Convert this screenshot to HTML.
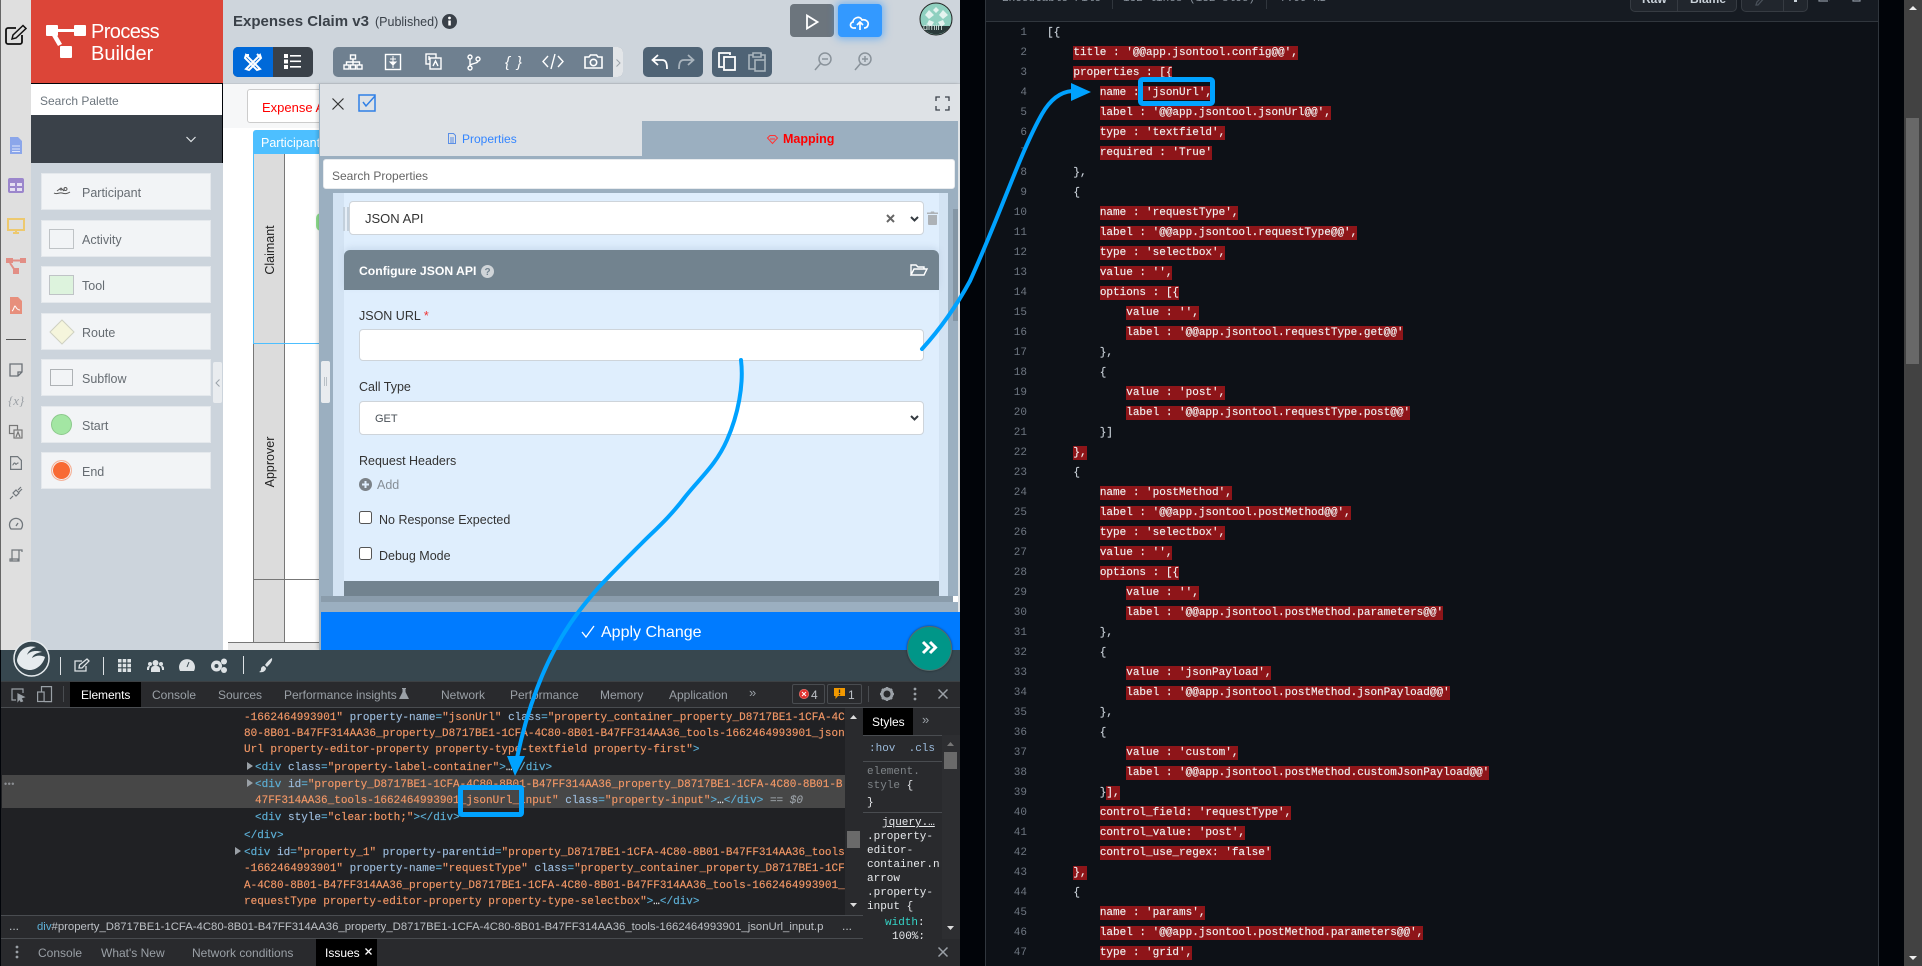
<!DOCTYPE html>
<html><head><meta charset="utf-8"><style>
*{box-sizing:border-box}
html,body{margin:0;padding:0;width:1922px;height:966px;overflow:hidden;background:#010409;font-family:"Liberation Sans",sans-serif}
.a{position:absolute}
.t{position:absolute;white-space:nowrap;line-height:1}
.card{position:absolute;left:41px;width:170px;height:37px;background:#f2f4f6;border:1px solid #e4e8ec}
.card span{position:absolute;left:40px;top:12px;font-size:12.5px;color:#666c72;line-height:14px}
pre{margin:0;font-family:"Liberation Mono",monospace}
#code{position:absolute;left:1047px;top:23px;font-size:11px;line-height:20px;color:#c9d1d9;-webkit-text-stroke:.15px}
#code i{font-style:normal;display:inline-block;background:#8e1519;color:#f0f0f0;line-height:14px;height:14px}
#nums{position:absolute;left:990px;width:37px;top:23px;font-size:11px;line-height:20px;color:#6e7681;text-align:right}
.dom{position:absolute;font:11px/14px "Liberation Mono",monospace;white-space:pre;color:#f29766;-webkit-text-stroke:.15px;margin-top:1px}
.dom b{font-weight:normal;color:#5db0d7}.dom u{text-decoration:none;color:#9bbbdc}
.tab{position:absolute;top:688px;font-size:12px;color:#9aa0a6;line-height:14px;white-space:nowrap}
.st{position:absolute;left:867px;font:11px/14px "Liberation Mono",monospace;color:#e8eaed;white-space:pre;margin-top:1px}
svg{position:absolute;overflow:visible}
</style></head><body>

<!-- left rail -->
<div class="a" style="left:0;top:0;width:31px;height:650px;background:#dfdfdf;border-left:1px solid #666"></div>
<svg style="left:4px;top:24px" width="24" height="22" viewBox="0 0 24 22" fill="none"><path d="M18 11v7a2 2 0 0 1-2 2H4a2 2 0 0 1-2-2V6a2 2 0 0 1 2-2h8" stroke="#111" stroke-width="1.8"/><path d="M8 15l1-4L19 1.5l3 3L12 14z" stroke="#111" stroke-width="1.5"/></svg>
<svg style="left:9px;top:137px" width="14" height="18" viewBox="0 0 14 18"><path d="M1 0h8l4 4v13H1z" fill="#8ba6ea"/><path d="M3 9h8M3 12h8M3 14.5h8" stroke="#dfe6fa"/></svg>
<svg style="left:8px;top:178px" width="16" height="15" viewBox="0 0 16 15"><rect width="16" height="15" rx="2" fill="#9b86cc"/><path d="M2 5h5v3H2zM9 5h5v3H9zM2 10h5v3H2zM9 10h5v3H9z" fill="#e5dff2"/></svg>
<svg style="left:7px;top:218px" width="18" height="16" viewBox="0 0 18 16" fill="none"><rect x="1" y="1" width="16" height="11" stroke="#edc96f" stroke-width="2"/><path d="M6 15h6M9 12v3" stroke="#edc96f" stroke-width="2"/></svg>
<svg style="left:6px;top:258px" width="20" height="16" viewBox="0 0 20 16"><g fill="#e28e85"><rect width="7" height="5"/><rect x="14" width="6" height="5"/><rect x="7" y="10" width="6" height="6"/></g><path d="M7 2.5h7M4 5l4 6" stroke="#e28e85" stroke-width="2"/></svg>
<svg style="left:9px;top:297px" width="14" height="18" viewBox="0 0 14 18"><path d="M1 0h8l4 4v13H1z" fill="#e78f7c"/><path d="M3 14c2-1 2-5 3-5s1 4 5 4" stroke="#fff" fill="none"/></svg>
<div class="a" style="left:6px;top:339px;width:20px;height:1px;background:#555"></div>
<svg style="left:9px;top:363px" width="14" height="14" viewBox="0 0 14 14" fill="none" stroke="#6b7177" stroke-width="1.3"><path d="M1 1h12v8l-4 4H1zM13 9H9v4"/></svg>
<div class="t" style="left:8px;top:393px;font:italic 13px 'Liberation Serif',serif;color:#9ca1a6">{x}</div>
<svg style="left:9px;top:425px" width="14" height="14" viewBox="0 0 14 14" fill="none" stroke="#777" stroke-width="1.2"><rect x=".5" y=".5" width="8" height="8"/><rect x="5" y="5" width="8" height="8" fill="#dfdfdf"/><path d="M7 12l2-5 2 5"/></svg>
<svg style="left:10px;top:456px" width="12" height="14" viewBox="0 0 12 14" fill="none" stroke="#70767b" stroke-width="1.2"><path d="M.6.6h7l3.8 3.8v9H.6zM2.5 9c1 0 1-2 2-2s1 2 2 1 1-1 2-1"/></svg>
<svg style="left:9px;top:486px" width="14" height="14" viewBox="0 0 14 14" fill="none" stroke="#70767b" stroke-width="1.2"><path d="M1 13l3-3M4 7l3 3 3-3-3-3zM9 4l3-3M10 6l3-3"/></svg>
<svg style="left:9px;top:519px" width="14" height="11" viewBox="0 0 14 11" fill="none" stroke="#70767b" stroke-width="1.3"><path d="M2 10a6.5 6.5 0 1 1 10 0zM7 7l2-3"/></svg>
<svg style="left:9px;top:549px" width="14" height="14" viewBox="0 0 14 14" fill="none" stroke="#70767b" stroke-width="1.2"><path d="M3 12V1h10v2M10 1v11H1v-2h8v2"/></svg>

<!-- logo -->
<div class="a" style="left:31px;top:0;width:192px;height:83px;background:#dc4538"></div>
<svg style="left:46px;top:25px" width="41" height="33" viewBox="0 0 41 33"><g fill="#fff"><rect width="12" height="11" rx="1"/><rect x="28" width="12" height="11" rx="1"/><rect x="14" y="21" width="12" height="12" rx="1"/><rect x="10" y="4" width="20" height="3"/><path d="M5 9l4-2 7 12-4 2z"/></g></svg>
<div class="t" style="left:91px;top:21px;font-size:20px;color:#fff;line-height:22px;letter-spacing:-.6px">Process</div>
<div class="t" style="left:91px;top:43px;font-size:20px;color:#fff;line-height:22px">Builder</div>

<!-- palette -->
<div class="a" style="left:31px;top:84px;width:191px;height:31px;background:#fff"></div>
<div class="t" style="left:40px;top:95px;font-size:12px;color:#6c757d">Search Palette</div>
<div class="a" style="left:31px;top:115px;width:191px;height:48px;background:#3a4149"></div>
<svg style="left:186px;top:136px" width="10" height="7" viewBox="0 0 10 7" fill="none" stroke="#dfe3e6" stroke-width="1.2"><path d="M.5 1L5 5.5 9.5 1"/></svg>
<div class="a" style="left:31px;top:163px;width:192px;height:487px;background:#ccd4dc"></div>
<div class="card" style="top:173px"><span>Participant</span></div>
<svg style="left:53px;top:186px" width="18" height="11" viewBox="0 0 18 11" fill="none" stroke="#555" stroke-width="1"><path d="M1 7c3 2 5-1 8 0s5 1 8-1M4 5l4-3 3 3M11 3a1.5 1.5 0 1 0 3 0 1.5 1.5 0 1 0-3 0M7 3a1 1 0 1 0 2 0"/></svg>
<div class="card" style="top:220px"><span>Activity</span></div>
<div class="a" style="left:49px;top:229px;width:25px;height:20px;background:#f2f4f6;border:1.5px solid #bfc3c6"></div>
<div class="card" style="top:266px"><span>Tool</span></div>
<div class="a" style="left:49px;top:275px;width:25px;height:20px;background:#ddf3dd;border:1.5px solid #bfc3c6"></div>
<div class="card" style="top:313px"><span>Route</span></div>
<svg style="left:50px;top:320px" width="24" height="24" viewBox="0 0 24 24"><path d="M12 0l12 12-12 12L0 12z" fill="#f5f5dc" stroke="#cfd1c2"/></svg>
<div class="card" style="top:359px"><span>Subflow</span></div>
<div class="a" style="left:50px;top:369px;width:23px;height:17px;background:#f2f4f6;border:1px solid #aeb2b5"></div>
<div class="card" style="top:406px"><span>Start</span></div>
<div class="a" style="left:51px;top:414px;width:21px;height:21px;border-radius:50%;background:#a3e6a3;border:1px solid #8cc98c"></div>
<div class="card" style="top:452px"><span>End</span></div>
<div class="a" style="left:51px;top:460px;width:21px;height:21px;border-radius:50%;background:#f86a34;box-shadow:inset 0 0 0 1px #f2f4f6;border:1px solid #f5b39a"></div>
<div class="a" style="left:213px;top:362px;width:9px;height:41px;background:#e9ecef;border-radius:2px"></div>
<svg style="left:215px;top:379px" width="5" height="8" viewBox="0 0 5 8" fill="none" stroke="#9aa2a9"><path d="M4.5.5L1 4l3.5 3.5"/></svg>

<!-- header -->
<div class="a" style="left:223px;top:0;width:737px;height:84px;background:#ced5dc;border-bottom:1px solid #c2c8ce"></div>
<div class="t" style="left:233px;top:14px;font-size:15px;font-weight:bold;color:#3a4149">Expenses Claim v3</div>
<div class="t" style="left:375px;top:16px;font-size:12.5px;color:#3a4149">(Published)</div>
<svg style="left:442px;top:14px" width="15" height="15" viewBox="0 0 15 15"><circle cx="7.5" cy="7.5" r="7.5" fill="#3a4149"/><rect x="6.3" y="6.5" width="2.5" height="5" fill="#fff"/><circle cx="7.5" cy="4" r="1.4" fill="#fff"/></svg>
<div class="a" style="left:233px;top:47px;width:80px;height:30px;background:#3a4149;border-radius:5px"></div>
<div class="a" style="left:233px;top:47px;width:40px;height:30px;background:#0069d9;border-radius:5px 0 0 5px"></div>
<svg style="left:244px;top:53px" width="18" height="18" viewBox="0 0 18 18" fill="none" stroke="#fff" stroke-width="2"><path d="M2 2l14 14-3 1L1 5zM16 2L2 16l3 1L17 5zM2 2l3 0M13 1l4 4"/></svg>
<svg style="left:284px;top:54px" width="17" height="15" viewBox="0 0 17 15"><g fill="#fff"><rect width="4" height="4"/><rect y="5.5" width="4" height="4"/><rect y="11" width="4" height="4"/><rect x="6" y="1" width="11" height="1.6"/><rect x="6" y="6.5" width="11" height="1.6"/><rect x="6" y="12" width="11" height="1.6"/></g></svg>
<div class="a" style="left:333px;top:47px;width:290px;height:30px;background:#6f8090;border-radius:5px"></div>
<div class="a" style="left:613px;top:47px;width:10px;height:30px;background:#e2e5e8;border-radius:0 5px 5px 0"></div>
<svg style="left:616px;top:59px" width="5" height="8" viewBox="0 0 5 8" fill="none" stroke="#9aa2a9"><path d="M.5.5L4 4 .5 7.5"/></svg>
<svg style="left:343px;top:54px" width="20" height="16" viewBox="0 0 20 16" fill="none" stroke="#fff" stroke-width="1.4"><rect x="7.5" y="1" width="5" height="4"/><rect x="1" y="11" width="5" height="4"/><rect x="7.5" y="11" width="5" height="4"/><rect x="14" y="11" width="5" height="4"/><path d="M10 5v6M3.5 11V8h13v3"/></svg>
<svg style="left:385px;top:54px" width="16" height="16" viewBox="0 0 16 16"><rect x=".5" y=".5" width="15" height="15" fill="none" stroke="#fff" stroke-width="1.4"/><path d="M8 2v12M5 5h6M5 8h6l-3 3z" stroke="#fff" fill="#fff"/></svg>
<svg style="left:425px;top:53px" width="17" height="17" viewBox="0 0 17 17" fill="none" stroke="#fff" stroke-width="1.4"><rect x="1" y="1" width="10" height="10"/><rect x="5" y="5" width="11" height="11" fill="#6f8090"/><path d="M8 13l2.5-5 2.5 5M4 3v4"/></svg>
<svg style="left:467px;top:54px" width="14" height="17" viewBox="0 0 14 17" fill="none" stroke="#fff" stroke-width="1.4"><circle cx="3" cy="3" r="2"/><circle cx="3" cy="14" r="2"/><circle cx="11" cy="5" r="2"/><path d="M3 5v7M11 7c0 3-8 2-8 5"/></svg>
<div class="t" style="left:505px;top:54px;font:italic 15px 'Liberation Sans',sans-serif;color:#fff;letter-spacing:-.5px">{&nbsp;&nbsp;}</div>
<svg style="left:542px;top:54px" width="22" height="15" viewBox="0 0 22 15" fill="none" stroke="#fff" stroke-width="1.4"><path d="M6 2L1 7.5 6 13M16 2l5 5.5-5 5.5M13 0L9 15"/></svg>
<svg style="left:584px;top:54px" width="19" height="15" viewBox="0 0 19 15" fill="none" stroke="#fff" stroke-width="1.6"><path d="M1 3h4l1.500-2h6L14 3h4v11H1z"/><circle cx="9.5" cy="8.5" r="3.2"/></svg>
<div class="a" style="left:643px;top:47px;width:60px;height:30px;background:#4f6375;border-radius:5px"></div>
<svg style="left:651px;top:54px" width="44" height="16" viewBox="0 0 44 16" fill="none" stroke-width="1.8"><path d="M7 1L1.500 6 7 11M2 6h9c4 0 5 3 5 9" stroke="#fff"/><path d="M37 1l5.500 5L37 11M42 6h-9c-4 0-5 3-5 9" stroke="#a9b4bd"/></svg>
<div class="a" style="left:712px;top:47px;width:60px;height:30px;background:#4f6375;border-radius:5px"></div>
<svg style="left:718px;top:52px" width="18" height="19" viewBox="0 0 18 19" fill="none" stroke="#fff" stroke-width="1.8"><path d="M12 3V1H1v14h4"/><rect x="6" y="5" width="11" height="13" fill="#4f6375"/></svg>
<svg style="left:748px;top:52px" width="18" height="20" viewBox="0 0 18 20" fill="none" stroke="#a9b4bd" stroke-width="1.6"><path d="M5 3H1v14h6M13 3h4v5M5 1h8v4H5z"/><rect x="7" y="8" width="10" height="11"/></svg>
<svg style="left:814px;top:52px" width="18" height="19" viewBox="0 0 18 19" fill="none" stroke="#8a939b" stroke-width="1.5"><circle cx="11" cy="7" r="6"/><path d="M6.500 11.500L1 18M8 7h6"/></svg>
<svg style="left:854px;top:52px" width="18" height="19" viewBox="0 0 18 19" fill="none" stroke="#8a939b" stroke-width="1.5"><circle cx="11" cy="7" r="6"/><path d="M6.500 11.500L1 18M8 7h6M11 4v6"/></svg>
<div class="a" style="left:790px;top:4px;width:44px;height:33px;background:#6c757d;border-radius:4px"></div>
<svg style="left:806px;top:14px" width="13" height="16" viewBox="0 0 13 16" fill="none" stroke="#fff" stroke-width="1.8"><path d="M1 1.500v13L11.500 8z"/></svg>
<div class="a" style="left:838px;top:4px;width:44px;height:33px;background:#3399ff;border-radius:4px;box-shadow:0 0 8px 2px rgba(51,153,255,.55)"></div>
<svg style="left:850px;top:15px" width="20" height="16" viewBox="0 0 20 16" fill="none" stroke="#fff" stroke-width="1.7"><path d="M6 13H4a3 3 0 0 1-1-6c0-4 7-7 9-2 4-1 7 2 6 5-.5 2-2 3-4 3M10 15V7M7 10l3-3 3 3"/></svg>
<svg style="left:919px;top:2px" width="34" height="34" viewBox="0 0 34 34"><circle cx="17" cy="17" r="16" fill="#8fd0c0" stroke="#222" stroke-width="1"/><path d="M10 8l5 5-5 4-4-4zM24 8l5 5-5 4-4-4zM17 5l3 3-3 3-3-3zM10 18l5 2-3 5-4-3zM24 18l-5 2 3 5 4-3z" fill="#e3f3ef"/><path d="M3 24h28a16 16 0 0 1-28 0z" fill="#2a3a3a"/></svg>
<div class="t" style="left:923px;top:23px;font-size:9px;color:#d8e8e5">dmin</div>

<!-- canvas -->
<div class="a" style="left:223px;top:84px;width:100px;height:566px;background:#fff"></div>
<div class="a" style="left:223px;top:84px;width:100px;height:44px;background:#f6f7f8"></div>
<div class="a" style="left:247px;top:89px;width:80px;height:34px;background:#fff;border:1px solid #ccc;border-radius:3px"></div>
<div class="t" style="left:262px;top:101px;font-size:13px;color:#f00">Expense A</div>
<div class="a" style="left:253px;top:130px;width:68px;height:24px;background:#4dbfff;border-radius:3px 0 0 0"></div>
<div class="t" style="left:261px;top:137px;font-size:12.5px;color:#fff">Participant</div>
<div class="a" style="left:253px;top:154px;width:32px;height:489px;background:#dcdcdc;border-left:1px solid #777;border-right:1px solid #777;border-bottom:1px solid #777"></div>
<div class="a" style="left:253px;top:154px;width:1px;height:189px;background:#4dbfff"></div>
<div class="a" style="left:253px;top:343px;width:68px;height:1px;background:#4dbfff"></div>
<div class="a" style="left:253px;top:579px;width:68px;height:1px;background:#777"></div>
<div class="a" style="left:284px;top:642px;width:37px;height:1px;background:#777"></div>
<div class="a" style="left:228px;top:643px;width:93px;height:7px;background:#e8e8e8"></div>
<div class="a" style="left:228px;top:642px;width:25px;height:1px;background:#777"></div>
<div class="t" style="left:242px;top:250px;font-size:12.5px;color:#222;transform:translate(-50%,-50%) rotate(-90deg);transform-origin:center;margin-left:28px">Claimant</div>
<div class="t" style="left:242px;top:462px;font-size:12.5px;color:#222;transform:translate(-50%,-50%) rotate(-90deg);transform-origin:center;margin-left:28px">Approver</div>
<div class="a" style="left:316px;top:213px;width:5px;height:18px;background:#8fe08f;border-radius:5px 0 0 5px"></div>

<!-- panel -->
<div class="a" style="left:319px;top:84px;width:641px;height:566px;background:#9bafc0;box-shadow:-2px 0 3px rgba(0,0,0,.15)"></div>
<div class="a" style="left:320px;top:84px;width:640px;height:37px;background:#dee2e6"></div>
<div class="a" style="left:320px;top:121px;width:322px;height:35px;background:#dee2e6"></div>
<svg style="left:332px;top:98px" width="12" height="12" viewBox="0 0 12 12" stroke="#333" stroke-width="1.2"><path d="M.5.500l11 11M11.500.500l-11 11"/></svg>
<svg style="left:358px;top:94px" width="19" height="18" viewBox="0 0 19 18" fill="none" stroke="#2f7fe6" stroke-width="1.5"><rect x="1" y="1" width="16" height="16"/><path d="M5 8l3 4 9-10"/></svg>
<svg style="left:935px;top:96px" width="15" height="15" viewBox="0 0 15 15" fill="none" stroke="#3a4149" stroke-width="1.3"><path d="M1 5V1h4M10 1h4v4M14 10v4h-4M5 14H1v-4"/></svg>
<svg style="left:448px;top:133px" width="8" height="11" viewBox="0 0 8 11" fill="none" stroke="#5b8fe6"><path d="M.5.500h5l2 2v8h-7zM2 5h4M2 7h4M2 9h4"/></svg>
<div class="t" style="left:462px;top:133px;font-size:12px;color:#3385ff">Properties</div>
<div class="a" style="left:642px;top:121px;width:316px;height:35px;background:#9bafc0;border-radius:4px 4px 0 0"></div>
<svg style="left:767px;top:135px" width="11" height="9" viewBox="0 0 11 9" fill="none" stroke="#f33"><path d="M.5 3L3 .5h5L10.500 3 5.500 8.500zM3 4h5"/></svg>
<div class="t" style="left:783px;top:133px;font-size:12.5px;font-weight:bold;color:#f00">Mapping</div>
<div class="a" style="left:323px;top:159px;width:632px;height:30px;background:#fff;border:1px solid #e8ebee;border-radius:3px"></div>
<div class="t" style="left:332px;top:170px;font-size:12px;color:#666">Search Properties</div>
<div class="a" style="left:333px;top:193px;width:615px;height:403px;background:#dfeefd"></div>
<div class="a" style="left:333px;top:193px;width:11px;height:403px;background:#d3e3f3"></div>
<div class="a" style="left:939px;top:193px;width:9px;height:403px;background:#d3e3f3"></div>
<div class="a" style="left:948px;top:189px;width:10px;height:407px;background:#9bafc0"></div>
<div class="a" style="left:953px;top:209px;width:5px;height:112px;background:#8496a5"></div>
<div class="a" style="left:958px;top:84px;width:2px;height:566px;background:#dfe3e6"></div>
<div class="a" style="left:343px;top:207px;width:2px;height:24px;background:#c3d0dc;box-shadow:2px 0 0 #e6eff8,4px 0 0 #c3d0dc"></div>
<div class="a" style="left:349px;top:201px;width:575px;height:34px;background:#fff;border:1px solid #ced4da;border-radius:4px"></div>
<div class="t" style="left:365px;top:212px;font-size:13px;color:#333">JSON API</div>
<svg style="left:886px;top:214px" width="9" height="9" viewBox="0 0 9 9" stroke="#666" stroke-width="2"><path d="M1 1l7 7M8 1L1 8"/></svg>
<svg style="left:910px;top:216px" width="9" height="6" viewBox="0 0 9 6" fill="none" stroke="#343a40" stroke-width="2"><path d="M1 1l3.500 3.500L8 1"/></svg>
<svg style="left:927px;top:211px" width="11" height="14" viewBox="0 0 11 14" fill="#adb2b7"><path d="M0 1.500h3.500L4 .5h3l.5 1H11V3H0zM1 4h9v9a1 1 0 0 1-1 1H2a1 1 0 0 1-1-1z"/></svg>
<div class="a" style="left:344px;top:250px;width:595px;height:40px;background:#72838f;border-radius:6px 6px 0 0;box-shadow:0 -3px 6px rgba(150,175,200,.25)"></div>
<div class="t" style="left:359px;top:265px;font-size:12.2px;font-weight:bold;color:#fff">Configure JSON API</div>
<svg style="left:481px;top:265px" width="13" height="13" viewBox="0 0 13 13"><circle cx="6.500" cy="6.500" r="6.500" fill="#cfd4d8"/><text x="6.500" y="10" font-size="10" font-weight="bold" text-anchor="middle" fill="#72838f" font-family="Liberation Sans">?</text></svg>
<svg style="left:910px;top:264px" width="18" height="12" viewBox="0 0 18 12" fill="none" stroke="#fff" stroke-width="1.4"><path d="M1 11V1h5l2 2h6v2M1 11l3-6h13l-3 6z"/></svg>
<div class="t" style="left:359px;top:310px;font-size:12.5px;color:#333">JSON URL <span style="color:#e33">*</span></div>
<div class="a" style="left:359px;top:329px;width:565px;height:32px;background:#fff;border:1px solid #ced4da;border-radius:4px"></div>
<div class="t" style="left:359px;top:381px;font-size:12.5px;color:#333">Call Type</div>
<div class="a" style="left:359px;top:401px;width:565px;height:34px;background:#fff;border:1px solid #ced4da;border-radius:4px"></div>
<div class="t" style="left:375px;top:414px;font-size:11px;color:#495057">GET</div>
<svg style="left:910px;top:415px" width="9" height="6" viewBox="0 0 9 6" fill="none" stroke="#343a40" stroke-width="2"><path d="M1 1l3.500 3.500L8 1"/></svg>
<div class="t" style="left:359px;top:455px;font-size:12.5px;color:#333">Request Headers</div>
<svg style="left:359px;top:478px" width="13" height="13" viewBox="0 0 13 13"><circle cx="6.500" cy="6.500" r="6.500" fill="#7b8288"/><path d="M6.500 3v7M3 6.500h7" stroke="#dfeefd" stroke-width="2"/></svg>
<div class="t" style="left:377px;top:479px;font-size:12.5px;color:#868e96">Add</div>
<div class="a" style="left:359px;top:511px;width:13px;height:13px;background:#fff;border:1px solid #555;border-radius:2.5px"></div>
<div class="t" style="left:379px;top:514px;font-size:12.5px;color:#333">No Response Expected</div>
<div class="a" style="left:359px;top:547px;width:13px;height:13px;background:#fff;border:1px solid #555;border-radius:2.5px"></div>
<div class="t" style="left:379px;top:550px;font-size:12.5px;color:#333">Debug Mode</div>
<div class="a" style="left:344px;top:581px;width:595px;height:15px;background:#72838f"></div>
<div class="a" style="left:321px;top:596px;width:637px;height:6px;background:#8a9cab"></div>
<div class="a" style="left:953px;top:596px;width:5px;height:6px;background:#fff"></div>
<div class="a" style="left:321px;top:612px;width:639px;height:38px;background:#007bff"></div>
<svg style="left:581px;top:625px" width="14" height="13" viewBox="0 0 14 13" fill="none" stroke="#fff" stroke-width="1.3"><path d="M1 7l4 5 8-11"/></svg>
<div class="t" style="left:601px;top:625px;font-size:16px;color:#fff">Apply Change</div>
<div class="a" style="left:321px;top:361px;width:9px;height:42px;background:#e9ecef;border-radius:2px"></div>
<div class="a" style="left:324px;top:377px;width:1px;height:9px;background:#b9c0c6;box-shadow:2px 0 0 #b9c0c6"></div>

<!-- devtools -->
<div class="a" style="left:1px;top:650px;width:959px;height:31px;background:#37474f"></div>
<svg style="left:13px;top:640px" width="37" height="37" viewBox="0 0 37 37"><circle cx="18.500" cy="18.500" r="17.500" fill="#37474f" stroke="#e6ebee" stroke-width="1.5"/><path d="M4 20C6 9 14 5 23 7c-6 2-8 5-9 8 3-4 9-5 15-3-6 1-9 3-10 6 4-3 9-3 13-1-2 8-9 13-15 13-7 0-13-5-13-10z" fill="#e6ebee"/></svg>
<div class="a" style="left:60px;top:657px;width:1px;height:18px;background:#dde2e5"></div>
<div class="a" style="left:103px;top:657px;width:1px;height:18px;background:#dde2e5"></div>
<div class="a" style="left:243px;top:656px;width:1px;height:18px;background:#dde2e5"></div>
<svg style="left:74px;top:658px" width="16" height="15" viewBox="0 0 16 15" fill="none" stroke="#dde2e5" stroke-width="1.3"><path d="M12 8v5H1V3h7"/><path d="M5 10l.5-3L13 1l2 2-7 7z"/></svg>
<svg style="left:118px;top:659px" width="13" height="13" viewBox="0 0 13 13" fill="#dde2e5"><path d="M0 0h3.500v3.500H0zM4.700 0h3.500v3.500H4.700zM9.400 0H13v3.500H9.400zM0 4.700h3.500v3.500H0zM4.700 4.700h3.500v3.500H4.700zM9.400 4.700H13v3.500H9.400zM0 9.400h3.500V13H0zM4.700 9.400h3.500V13H4.700zM9.400 9.400H13V13H9.400z"/></svg>
<svg style="left:147px;top:660px" width="17" height="12" viewBox="0 0 17 12" fill="#dde2e5"><circle cx="8.500" cy="3" r="3"/><circle cx="3" cy="4" r="2"/><circle cx="14" cy="4" r="2"/><path d="M4 12V9a3 3 0 0 1 3-3h3a3 3 0 0 1 3 3v3zM0 10V8c0-1 1-2 2-2h1l-1 3v1zM17 10V8c0-1-1-2-2-2h-1l1 3v1z"/></svg>
<svg style="left:179px;top:658px" width="16" height="14" viewBox="0 0 16 14" fill="#dde2e5"><path d="M1 13a8 8 0 1 1 14 0z"/><path d="M8 9l2-5" stroke="#37474f"/></svg>
<svg style="left:210px;top:658px" width="18" height="15" viewBox="0 0 18 15" fill="#dde2e5"><circle cx="6.500" cy="8" r="5.500"/><circle cx="14" cy="3.500" r="3"/><circle cx="14" cy="12" r="3"/><circle cx="6.500" cy="8" r="2" fill="#37474f"/></svg>
<svg style="left:259px;top:658px" width="14" height="15" viewBox="0 0 14 15" fill="#dde2e5"><path d="M13 0c1 3-3 7-5 9L6 7c2-3 5-6 7-7zM5 8l2 2c0 3-3 5-7 4 2-1 2-2 2-3 0-2 2-3 3-3z"/></svg>
<div class="a" style="left:1px;top:681px;width:959px;height:27px;background:#292a2d;border-top:1px solid #3c4043;border-bottom:1px solid #494c50"></div>
<svg style="left:11px;top:688px" width="14" height="14" viewBox="0 0 14 14" fill="none" stroke="#9aa0a6" stroke-width="1.2"><path d="M5 12H1V1h11v4"/><path d="M7 6l6 3-3 1 1.500 3-1.500.5L8.500 11 7 13z" fill="#9aa0a6"/></svg>
<svg style="left:37px;top:686px" width="15" height="16" viewBox="0 0 15 16" fill="none" stroke="#9aa0a6" stroke-width="1.2"><path d="M4.500 6V.6h10v15h-7"/><rect x=".6" y="6" width="6.500" height="9.500"/></svg>
<div class="a" style="left:63px;top:686px;width:1px;height:16px;background:#494c50"></div>
<div class="a" style="left:70px;top:682px;width:71px;height:25px;background:#000"></div>
<div class="tab" style="left:81px;color:#fff;letter-spacing:-.1px">Elements</div>
<div class="tab" style="left:152px">Console</div>
<div class="tab" style="left:218px">Sources</div>
<div class="tab" style="left:284px">Performance insights</div>
<svg style="left:399px;top:688px" width="10" height="11" viewBox="0 0 10 11" fill="#9aa0a6"><path d="M3 0h4v1H6.500v3L10 11H0l3.500-7V1H3z"/></svg>
<div class="tab" style="left:441px">Network</div>
<div class="tab" style="left:510px">Performance</div>
<div class="tab" style="left:600px">Memory</div>
<div class="tab" style="left:669px">Application</div>
<div class="tab" style="left:749px;font-size:13px;top:686px">»</div>
<div class="a" style="left:792px;top:684px;width:33px;height:20px;border:1px solid #494c50;border-radius:2px"></div>
<svg style="left:799px;top:689px" width="10" height="10" viewBox="0 0 10 10"><circle cx="5" cy="5" r="5" fill="#f28b82"/><circle cx="5" cy="5" r="4.500" fill="#e0312e"/><path d="M3 3l4 4M7 3L3 7" stroke="#fff"/></svg>
<div class="tab" style="left:811px;top:688px;color:#bdc1c6">4</div>
<div class="a" style="left:827px;top:684px;width:35px;height:20px;border:1px solid #494c50;border-radius:2px"></div>
<svg style="left:834px;top:688px" width="11" height="11" viewBox="0 0 11 11"><path d="M0 0h11v8H4L1.500 11V8H0z" fill="#f29900"/><path d="M5.500 1.500v3.500M5.500 6v1.200" stroke="#292a2d" stroke-width="1.3"/></svg>
<div class="tab" style="left:848px;top:688px;color:#bdc1c6">1</div>
<div class="a" style="left:868px;top:686px;width:1px;height:16px;background:#494c50"></div>
<svg style="left:880px;top:687px" width="14" height="14" viewBox="0 0 14 14"><circle cx="7" cy="7" r="5" fill="none" stroke="#9aa0a6" stroke-width="3"/><path d="M7 0v3M7 11v3M0 7h3M11 7h3M2 2l2 2M10 10l2 2M2 12l2-2M10 4l2-2" stroke="#9aa0a6" stroke-width="2"/></svg>
<svg style="left:913px;top:687px" width="4" height="14" viewBox="0 0 4 14" fill="#9aa0a6"><circle cx="2" cy="2" r="1.400"/><circle cx="2" cy="7" r="1.400"/><circle cx="2" cy="12" r="1.400"/></svg>
<svg style="left:938px;top:689px" width="10" height="10" viewBox="0 0 10 10" stroke="#9aa0a6" stroke-width="1.5"><path d="M.5.500l9 9M9.500.500l-9 9"/></svg>

<div class="a" style="left:1px;top:708px;width:959px;height:207px;background:#202124"></div>
<div class="a" style="left:2px;top:775px;width:843px;height:33px;background:#474747"></div>
<div class="t" style="left:4px;top:780px;font-size:9px;color:#8b8e92;letter-spacing:.5px">•••</div>
<div class="dom" style="left:244px;top:710px">-1662464993901" <u>property-name</u><b>=</b>"jsonUrl" <u>class</u><b>=</b>"property_container_property_D8717BE1-1CFA-4C</div>
<div class="dom" style="left:244px;top:726px">80-8B01-B47FF314AA36_property_D8717BE1-1CFA-4C80-8B01-B47FF314AA36_tools-1662464993901_json</div>
<div class="dom" style="left:244px;top:742px">Url property-editor-property property-type-textfield property-first"<b>&gt;</b></div>
<svg style="left:247px;top:762px" width="6" height="8" viewBox="0 0 6 8" fill="#9aa0a6"><path d="M0 0l6 4-6 4z"/></svg>
<div class="dom" style="left:255px;top:760px"><b>&lt;div</b> <u>class</u><b>=</b>"property-label-container"<b>&gt;</b><span style="color:#e8eaed">…</span><b>&lt;/div&gt;</b></div>
<svg style="left:247px;top:779px" width="6" height="8" viewBox="0 0 6 8" fill="#9aa0a6"><path d="M0 0l6 4-6 4z"/></svg>
<div class="dom" style="left:255px;top:777px"><b>&lt;div</b> <u>id</u><b>=</b>"property_D8717BE1-1CFA-4C80-8B01-B47FF314AA36_property_D8717BE1-1CFA-4C80-8B01-B</div>
<div class="dom" style="left:255px;top:793px">47FF314AA36_tools-1662464993901_jsonUrl_input" <u>class</u><b>=</b>"property-input"<b>&gt;</b><span style="color:#e8eaed">…</span><b>&lt;/div&gt;</b> <span style="color:#9aa0a6">== <i>$0</i></span></div>
<div class="dom" style="left:255px;top:810px"><b>&lt;div</b> <u>style</u><b>=</b>"clear:both;"<b>&gt;&lt;/div&gt;</b></div>
<div class="dom" style="left:244px;top:828px"><b>&lt;/div&gt;</b></div>
<svg style="left:235px;top:847px" width="6" height="8" viewBox="0 0 6 8" fill="#9aa0a6"><path d="M0 0l6 4-6 4z"/></svg>
<div class="dom" style="left:244px;top:845px"><b>&lt;div</b> <u>id</u><b>=</b>"property_1" <u>property-parentid</u><b>=</b>"property_D8717BE1-1CFA-4C80-8B01-B47FF314AA36_tools</div>
<div class="dom" style="left:244px;top:861px">-1662464993901" <u>property-name</u><b>=</b>"requestType" <u>class</u><b>=</b>"property_container_property_D8717BE1-1CF</div>
<div class="dom" style="left:244px;top:878px">A-4C80-8B01-B47FF314AA36_property_D8717BE1-1CFA-4C80-8B01-B47FF314AA36_tools-1662464993901_</div>
<div class="dom" style="left:244px;top:894px">requestType property-editor-property property-type-selectbox"<b>&gt;</b><span style="color:#e8eaed">…</span><b>&lt;/div&gt;</b></div>
<div class="a" style="left:845px;top:708px;width:18px;height:207px;background:#292a2d"></div>
<div class="a" style="left:847px;top:831px;width:13px;height:17px;background:#6a6a6a"></div>
<svg style="left:850px;top:715px" width="7" height="4" viewBox="0 0 7 4" fill="#ddd"><path d="M0 4l3.500-4L7 4z"/></svg>
<svg style="left:850px;top:903px" width="7" height="4" viewBox="0 0 7 4" fill="#ddd"><path d="M0 0l3.500 4L7 0z"/></svg>

<!-- styles pane -->
<div class="a" style="left:863px;top:708px;width:97px;height:231px;background:#292a2d"></div>
<div class="a" style="left:863px;top:708px;width:50px;height:27px;background:#000"></div>
<div class="tab" style="left:872px;top:715px;color:#fff">Styles</div>
<div class="tab" style="left:922px;top:713px;font-size:13px">»</div>
<div class="a" style="left:863px;top:735px;width:79px;height:1px;background:#494c50"></div>
<div class="a" style="left:863px;top:761px;width:79px;height:1px;background:#494c50"></div>
<div class="a" style="left:863px;top:812px;width:79px;height:1px;background:#494c50"></div>
<div class="a" style="left:942px;top:735px;width:18px;height:204px;background:#2d2e31"></div>
<div class="a" style="left:944px;top:752px;width:13px;height:17px;background:#6a6a6a"></div>
<svg style="left:947px;top:742px" width="7" height="4" viewBox="0 0 7 4" fill="#777"><path d="M0 4l3.500-4L7 4z"/></svg>
<svg style="left:947px;top:926px" width="7" height="4" viewBox="0 0 7 4" fill="#ddd"><path d="M0 0l3.500 4L7 0z"/></svg>
<div class="st" style="left:869px;top:741px;color:#9bbbdc">:hov  .cls</div>
<div class="st" style="top:764px;color:#7f8488">element.</div>
<div class="st" style="top:778px;color:#7f8488">style <span style="color:#e8eaed">{</span></div>
<div class="st" style="top:795px">}</div>
<div class="st" style="left:882px;top:815px;text-decoration:underline">jquery.…</div>
<div class="st" style="top:829px">.property-</div>
<div class="st" style="top:843px">editor-</div>
<div class="st" style="top:857px">container.n</div>
<div class="st" style="top:871px">arrow</div>
<div class="st" style="top:885px">.property-</div>
<div class="st" style="top:899px">input {</div>
<div class="st" style="left:885px;top:915px;color:#35d4c7">width<span style="color:#e8eaed">:</span></div>
<div class="a" style="left:863px;top:931px;width:79px;height:8px;overflow:hidden"><div class="st" style="left:29px;top:-2px">100%;</div></div>

<!-- breadcrumb -->
<div class="a" style="left:1px;top:915px;width:862px;height:24px;background:#292a2d;border-top:1px solid #494c50;border-bottom:1px solid #494c50"></div>
<div class="t" style="left:9px;top:920px;font-size:12px;color:#bdc1c6">...</div>
<div class="a" style="left:37px;top:919px;width:796px;height:16px;overflow:hidden;font-size:11.35px;line-height:16px;white-space:nowrap;color:#bdc1c6"><span style="color:#5db0d7">div</span>#property_D8717BE1-1CFA-4C80-8B01-B47FF314AA36_property_D8717BE1-1CFA-4C80-8B01-B47FF314AA36_tools-1662464993901_jsonUrl_input.p</div>
<div class="t" style="left:842px;top:920px;font-size:12px;color:#bdc1c6">...</div>
<div class="a" style="left:1px;top:939px;width:959px;height:27px;background:#292a2d"></div>
<svg style="left:15px;top:945px" width="4" height="14" viewBox="0 0 4 14" fill="#9aa0a6"><circle cx="2" cy="2" r="1.400"/><circle cx="2" cy="7" r="1.400"/><circle cx="2" cy="12" r="1.400"/></svg>
<div class="tab" style="left:38px;top:946px">Console</div>
<div class="tab" style="left:101px;top:946px">What's New</div>
<div class="tab" style="left:192px;top:946px">Network conditions</div>
<div class="a" style="left:316px;top:939px;width:61px;height:27px;background:#000"></div>
<div class="tab" style="left:325px;top:946px;color:#fff">Issues</div>
<svg style="left:365px;top:948px" width="7" height="7" viewBox="0 0 7 7" stroke="#fff" stroke-width="1.3"><path d="M.5.500l6 6M6.500.500l-6 6"/></svg>
<svg style="left:938px;top:947px" width="10" height="10" viewBox="0 0 10 10" stroke="#9aa0a6" stroke-width="1.5"><path d="M.5.500l9 9M9.500.500l-9 9"/></svg>

<div class="a" style="left:907px;top:626px;width:45px;height:45px;border-radius:50%;background:#009688;border:1px solid #566b6b;box-shadow:0 0 2px rgba(0,0,0,.5)"></div>
<svg style="left:921px;top:640px" width="17" height="15" viewBox="0 0 17 15" fill="none" stroke="#fff" stroke-width="3"><path d="M2 2l5.500 5.500L2 13M9 2l5.500 5.500L9 13"/></svg>

<!-- right: github -->
<div class="a" style="left:960px;top:0;width:962px;height:966px;background:#010409"></div>
<div class="a" style="left:985px;top:0;width:894px;height:966px;background:#0d1117;border-left:1px solid #30363d;border-right:1px solid #30363d"></div>
<div class="a" style="left:986px;top:0;width:892px;height:22px;background:#161b22;border-bottom:1px solid #30363d"></div>
<div class="t" style="left:1002px;top:-6px;font:11px/1 'Liberation Mono',monospace;color:#8b949e">Executable File</div>
<div class="a" style="left:1112px;top:0;width:1px;height:9px;background:#30363d"></div>
<div class="t" style="left:1123px;top:-6px;font:11px/1 'Liberation Mono',monospace;color:#8b949e">152 lines (132 sloc)</div>
<div class="a" style="left:1266px;top:0;width:1px;height:9px;background:#30363d"></div>
<div class="t" style="left:1280px;top:-6px;font:11px/1 'Liberation Mono',monospace;color:#8b949e">7.66 KB</div>
<div class="a" style="left:1630px;top:-10px;width:107px;height:22px;background:#21262d;border:1px solid #363b42;border-radius:5px"></div>
<div class="a" style="left:1677px;top:0;width:1px;height:12px;background:#363b42"></div>
<div class="t" style="left:1642px;top:-7px;font:bold 12px/1 'Liberation Sans',sans-serif;color:#c9d1d9">Raw</div>
<div class="t" style="left:1690px;top:-7px;font:bold 12px/1 'Liberation Sans',sans-serif;color:#c9d1d9">Blame</div>
<div class="a" style="left:1741px;top:-10px;width:67px;height:22px;background:#21262d;border:1px solid #363b42;border-radius:5px"></div>
<div class="a" style="left:1783px;top:0;width:1px;height:12px;background:#363b42"></div>
<svg style="left:1755px;top:-4px" width="14" height="10" viewBox="0 0 14 10" fill="none" stroke="#484f58" stroke-width="1.3"><path d="M1 9l1-3 6-6h3L3 9z"/></svg>
<div class="a" style="left:1794px;top:0;width:3px;height:2px;background:#c9d1d9"></div>
<svg style="left:1818px;top:-4px" width="16" height="10" viewBox="0 0 16 10" fill="none" stroke="#8b949e" stroke-width="1.2"><path d="M1 0v5h9M5 0v2M14 1l-3 3"/></svg>
<svg style="left:1852px;top:-4px" width="9" height="10" viewBox="0 0 9 10" fill="none" stroke="#8b949e" stroke-width="1.2"><path d="M1 0v5h7V0"/></svg>
<pre id="nums">1
2
3
4
5
6
7
8
9
10
11
12
13
14
15
16
17
18
19
20
21
22
23
24
25
26
27
28
29
30
31
32
33
34
35
36
37
38
39
40
41
42
43
44
45
46
47</pre>
<pre id="code">[{
    <i>title : '@@app.jsontool.config@@',</i>
    <i>properties : [{</i>
        <i>name : 'jsonUrl',</i>
        <i>label : '@@app.jsontool.jsonUrl@@',</i>
        <i>type : 'textfield',</i>
        <i>required : 'True'</i>
    },
    {
        <i>name : 'requestType',</i>
        <i>label : '@@app.jsontool.requestType@@',</i>
        <i>type : 'selectbox',</i>
        <i>value : '',</i>
        <i>options : [{</i>
            <i>value : '',</i>
            <i>label : '@@app.jsontool.requestType.get@@'</i>
        },
        {
            <i>value : 'post',</i>
            <i>label : '@@app.jsontool.requestType.post@@'</i>
        }]
    <i>},</i>
    {
        <i>name : 'postMethod',</i>
        <i>label : '@@app.jsontool.postMethod@@',</i>
        <i>type : 'selectbox',</i>
        <i>value : '',</i>
        <i>options : [{</i>
            <i>value : '',</i>
            <i>label : '@@app.jsontool.postMethod.parameters@@'</i>
        },
        {
            <i>value : 'jsonPayload',</i>
            <i>label : '@@app.jsontool.postMethod.jsonPayload@@'</i>
        },
        {
            <i>value : 'custom',</i>
            <i>label : '@@app.jsontool.postMethod.customJsonPayload@@'</i>
        }<i>],</i>
        <i>control_field: 'requestType',</i>
        <i>control_value: 'post',</i>
        <i>control_use_regex: 'false'</i>
    <i>},</i>
    {
        <i>name : 'params',</i>
        <i>label : '@@app.jsontool.postMethod.parameters@@',</i>
        <i>type : 'grid',</i></pre>
<div class="a" style="left:1904px;top:0;width:18px;height:966px;background:#424242"></div>
<div class="a" style="left:1906px;top:118px;width:13px;height:246px;background:#686868"></div>
<svg style="left:1909px;top:6px" width="8" height="4" viewBox="0 0 8 4" fill="#eee"><path d="M0 4l4-4 4 4z"/></svg>
<svg style="left:1909px;top:956px" width="8" height="4" viewBox="0 0 8 4" fill="#eee"><path d="M0 0l4 4 4-4z"/></svg>

<!-- annotations -->
<svg style="left:0;top:0" width="1922" height="966" viewBox="0 0 1922 966" fill="none">
<path d="M922 349C942 327 958 303 970 281C984 250 996 220 1006 195C1018 165 1030 135 1042 114C1050 100 1060 92 1072 91" stroke="#00a2ff" stroke-width="4" stroke-linecap="round"/>
<path d="M1071 83L1091 92L1071 101z" fill="#00a2ff"/>
<path d="M741 360C744 385 738 415 727 440C716 465 700 478 685 497C670 517 655 530 642 543C625 560 612 573 599 587C585 603 572 619 560 640C545 665 528 705 517 758" stroke="#00a2ff" stroke-width="4" stroke-linecap="round"/>
<path d="M507 756L525 756L515 776z" fill="#00a2ff"/>
<rect x="460.500" y="787.500" width="61" height="27" rx="1.500" stroke="#00a2ff" stroke-width="5"/>
<rect x="1140.500" y="79.500" width="72" height="24" rx="2" stroke="#00a2ff" stroke-width="5"/>
</svg>
</body></html>
